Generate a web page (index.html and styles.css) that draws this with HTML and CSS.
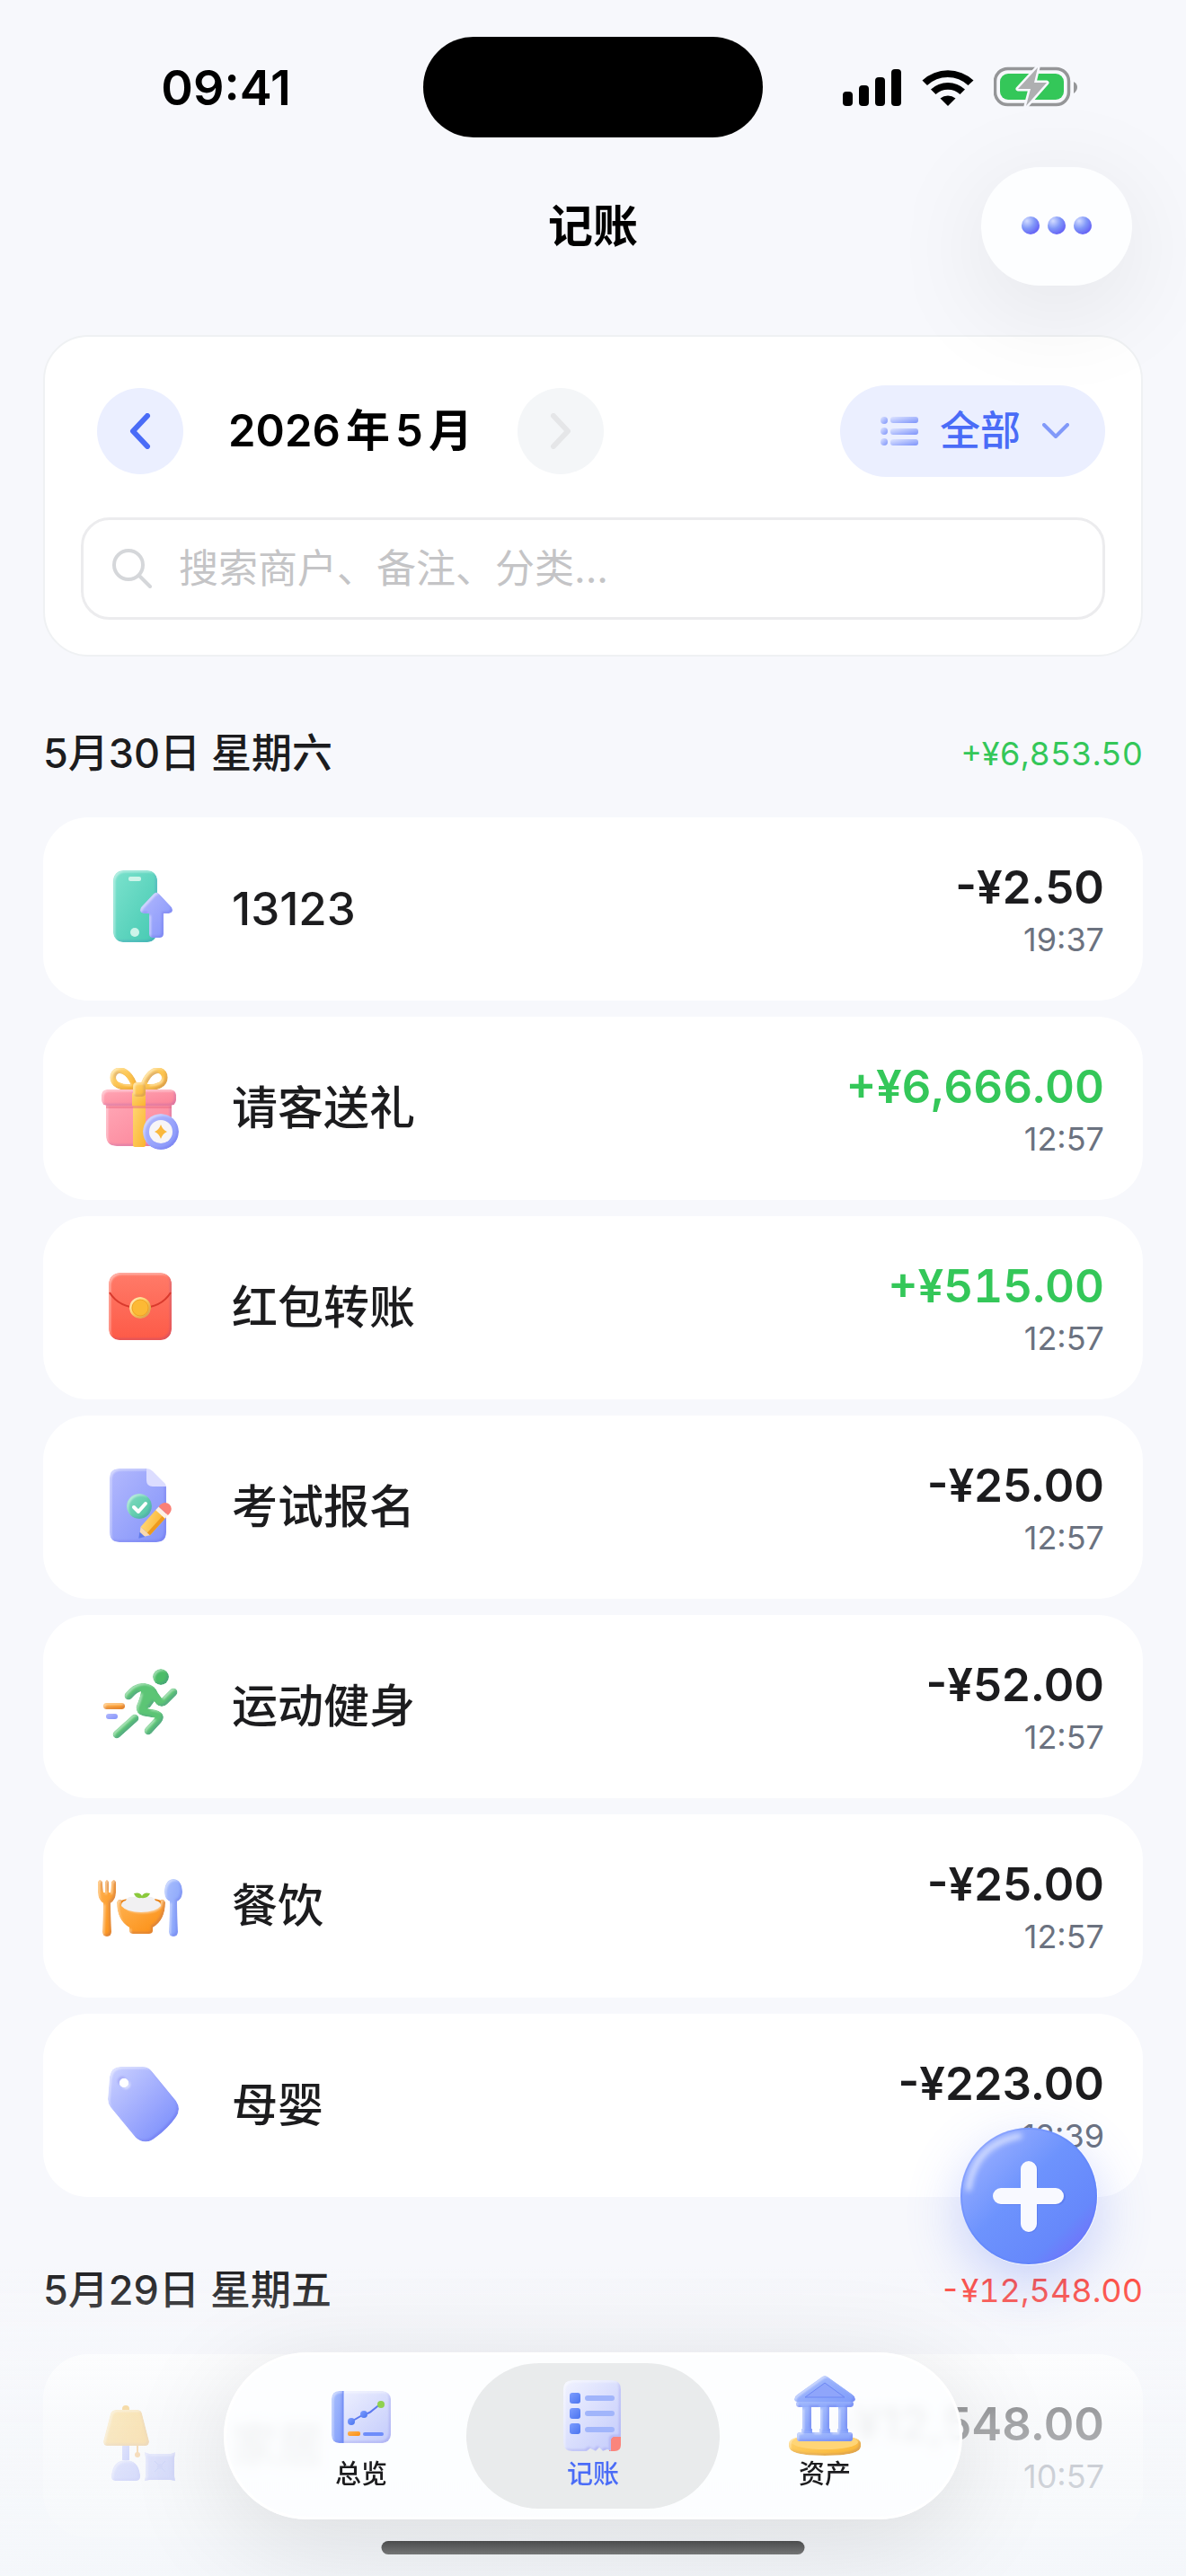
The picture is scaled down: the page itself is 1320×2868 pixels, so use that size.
FILE: index.html
```html
<!DOCTYPE html>
<html lang="zh-CN">

<head>
  <meta charset="utf-8">
  <meta name="viewport" content="width=device-width">
  <title>记账</title>
  <link rel="stylesheet" href="styles.css">
</head>

<body>
  <!-- shared gradients and the soft bevel used by the 3D icons -->
  <svg class="defs" width="0" height="0" aria-hidden="true">
    <defs>
      <linearGradient id="teal" x1="0" y1="0" x2="1" y2="1"><stop offset="0" stop-color="#7ce2cd"/><stop offset="1" stop-color="#45c9b2"/></linearGradient>
      <linearGradient id="violet" x1="0" y1="0" x2="1" y2="1"><stop offset="0" stop-color="#b3b9fd"/><stop offset="1" stop-color="#8393fa"/></linearGradient>
      <linearGradient id="pink" x1="0" y1="0" x2="1" y2="1"><stop offset="0" stop-color="#ffa6b5"/><stop offset="1" stop-color="#fb8297"/></linearGradient>
      <linearGradient id="gold" x1="0" y1="0" x2="1" y2="1"><stop offset="0" stop-color="#ffd674"/><stop offset="1" stop-color="#fab42f"/></linearGradient>
      <linearGradient id="red" x1="0" y1="0" x2="0" y2="1"><stop offset="0" stop-color="#ff7b69"/><stop offset="1" stop-color="#fd5a47"/></linearGradient>
      <linearGradient id="mint" x1="0" y1="0" x2="1" y2="1"><stop offset="0" stop-color="#83dcc2"/><stop offset="1" stop-color="#4cc39f"/></linearGradient>
      <linearGradient id="orange" x1="0" y1="0" x2="1" y2="1"><stop offset="0" stop-color="#ffb454"/><stop offset="1" stop-color="#fb8c0f"/></linearGradient>
      <linearGradient id="sky" x1="0" y1="0" x2="1" y2="1"><stop offset="0" stop-color="#a9bffd"/><stop offset="1" stop-color="#7f9cfa"/></linearGradient>
      <linearGradient id="tag" x1="0" y1="0" x2="1" y2="1"><stop offset="0" stop-color="#ccd2ff"/><stop offset=".6" stop-color="#98a5fd"/><stop offset="1" stop-color="#7389fb"/></linearGradient>
      <linearGradient id="paper" x1="0" y1="0" x2="1" y2="1"><stop offset="0" stop-color="#f1f3ff"/><stop offset="1" stop-color="#c2cafb"/></linearGradient>
      <linearGradient id="blue" x1="0" y1="0" x2="1" y2="1"><stop offset="0" stop-color="#7d9dff"/><stop offset="1" stop-color="#4a74ef"/></linearGradient>
      <linearGradient id="fab" x1="0" y1="0" x2="1" y2="1"><stop offset=".1" stop-color="#9bb0ff"/><stop offset=".45" stop-color="#6d93fd"/><stop offset=".75" stop-color="#6688fb"/><stop offset=".9" stop-color="#7270fa"/></linearGradient>
      <linearGradient id="dash" x1="0" y1="0" x2="1" y2="1"><stop offset="0" stop-color="#dfe5ff"/><stop offset="1" stop-color="#7c93fb"/></linearGradient>
      <radialGradient id="dot" cx=".3" cy=".25" r=".85"><stop offset="0" stop-color="#d3dcff"/><stop offset=".5" stop-color="#8097f8"/><stop offset="1" stop-color="#6058f5"/></radialGradient>
      <filter id="bevel" x="-10%" y="-10%" width="120%" height="120%" color-interpolation-filters="sRGB">
        <feOffset in="SourceAlpha" dx="2" dy="2" result="o1"/>
        <feComposite in="SourceAlpha" in2="o1" operator="out" result="edge1"/>
        <feGaussianBlur in="edge1" stdDeviation="1" result="b1"/>
        <feFlood flood-color="#fff" flood-opacity=".55"/>
        <feComposite in2="b1" operator="in" result="light"/>
        <feOffset in="SourceAlpha" dx="-2" dy="-2" result="o2"/>
        <feComposite in="SourceAlpha" in2="o2" operator="out" result="edge2"/>
        <feGaussianBlur in="edge2" stdDeviation="1" result="b2"/>
        <feFlood flood-color="#3b2fd0" flood-opacity=".18"/>
        <feComposite in2="b2" operator="in" result="dark"/>
        <feMerge result="all"><feMergeNode in="SourceGraphic"/><feMergeNode in="light"/><feMergeNode in="dark"/></feMerge>
        <feComposite in="all" in2="SourceAlpha" operator="in"/>
      </filter>
    </defs>
  </svg>

  <div class="status">
    <time class="clock">09:41</time>
    <div class="island"></div>
    <div class="indicators">
      <svg width="66" height="42" viewBox="0 0 66 42">
        <rect x="0" y="26" width="11" height="16" rx="4"/>
        <rect x="18" y="19" width="11" height="23" rx="4"/>
        <rect x="36" y="10" width="11" height="32" rx="4"/>
        <rect x="54" y="1" width="11" height="41" rx="4"/>
      </svg>
      <svg width="58" height="42" viewBox="0 0 58 42">
        <path d="M29 42 20.500 33.500A13.500 13.500 0 0 1 37.500 33.500Z"/>
        <path d="M10 23.500A28 28 0 0 1 48 23.500L42.500 29A20 20 0 0 0 15.500 29Z"/>
        <path d="M0.500 13.500A42 42 0 0 1 57.500 13.500L51.500 19A33 33 0 0 0 6 19Z"/>
      </svg>
      <svg width="94" height="46" viewBox="0 0 94 46">
        <rect x="1.500" y="2.500" width="82" height="40" rx="14" fill="none" stroke="#959698" stroke-width="3.500"/>
        <rect x="7" y="8" width="71" height="29" rx="9" fill="#34c759"/>
        <path d="M89 17q4 2 4 6t-4 7z" fill="#959698"/>
        <path d="M49 1 27 25h14l-5 19 23-26H45z" fill="#aeafb1" stroke="#f7f8fd" stroke-width="5" stroke-linejoin="round" paint-order="stroke"/>
      </svg>
    </div>
  </div>

  <header class="nav">
    <h1>记账</h1>
    <button class="more" aria-label="更多">
      <svg width="78" height="20" viewBox="0 0 78 20" fill="url(#dot)">
        <circle cx="10" cy="10" r="10"/><circle cx="39" cy="10" r="10"/><circle cx="68" cy="10" r="10"/>
      </svg>
    </button>
  </header>

  <main>
    <section class="filters">
      <div class="filter-row">
        <button class="round" aria-label="上个月">
          <svg width="24" height="40" viewBox="0 0 24 40"><path d="M20 3 4 20l16 17"/></svg>
        </button>
        <h2>2026年5月</h2>
        <button class="round" aria-label="下个月" disabled>
          <svg width="24" height="40" viewBox="0 0 24 40"><path d="m4 3 16 17L4 37"/></svg>
        </button>
        <button class="category">
          <svg width="42" height="34" viewBox="0 0 42 34" fill="url(#dash)">
            <circle cx="4" cy="5" r="4"/><rect x="11" y="1" width="31" height="7" rx="3"/>
            <circle cx="4" cy="17" r="4"/><rect x="11" y="14" width="31" height="7" rx="3"/>
            <circle cx="4" cy="29" r="4"/><rect x="11" y="26" width="31" height="7" rx="3"/>
          </svg>
          全部
          <svg class="caret" width="30" height="18" viewBox="0 0 30 18"><path d="m2 2 13 13L28 2"/></svg>
        </button>
      </div>
      <label class="search">
        <svg width="44" height="44" viewBox="0 0 44 44"><circle cx="18" cy="18" r="16"/><path d="m30 30 12 12"/></svg>
        <input type="text" placeholder="搜索商户、备注、分类..." aria-label="搜索">
      </label>
    </section>

    <section class="day">
      <header>
        <h3>5月30日 星期六</h3>
        <span class="total income">+¥6,853.50</span>
      </header>
      <ul>
        <li>
          <svg class="icon" viewBox="0 0 108 108">
            <rect x="24" y="11" width="49" height="80" rx="11" fill="url(#teal)" filter="url(#bevel)"/>
            <rect x="41" y="18" width="14" height="5" rx="2" fill="#cdf4e9"/>
            <circle cx="48" cy="80" r="5" fill="#cdf4e9"/>
            <path d="M69 37q3-3 6 0l14 15q3 6-3 7h-6v23q0 4-4 4h-8q-4 0-4-4V59h-6q-6-1-3-7z" fill="url(#violet)" filter="url(#bevel)"/>
          </svg>
          <span class="name">13123</span>
          <div class="sum"><b>-¥2.50</b><time>19:37</time></div>
        </li>
        <li>
          <svg class="icon" viewBox="0 0 108 108">
            <g fill="none" stroke="url(#gold)" stroke-width="7" filter="url(#bevel)">
              <path d="M48 30C44 17 36 10 29 12c-7 3-7 12 0 16 6 3 13 3 19 2z"/>
              <path d="M57 30C61 17 69 10 76 12c7 3 7 12 0 16-6 3-13 3-19 2z"/>
            </g>
            <path d="M16 49h73v35q0 12-12 12H28q-12 0-12-12z" fill="url(#pink)" filter="url(#bevel)"/>
            <rect x="46" y="49" width="14" height="48" rx="2" fill="url(#gold)"/>
            <path d="M16 51h73v3H16z" fill="#e8607b" opacity=".45"/>
            <rect x="11" y="33" width="83" height="18" rx="6" fill="url(#pink)" filter="url(#bevel)"/>
            <rect x="45" y="37" width="15" height="14" fill="url(#gold)"/>
            <rect x="46" y="25" width="14" height="16" rx="4" fill="url(#gold)" filter="url(#bevel)"/>
            <circle cx="77" cy="80" r="20" fill="url(#violet)" filter="url(#bevel)"/>
            <circle cx="77" cy="80" r="13" fill="#f7f5f7"/>
            <path d="M77 72q2 6 7 8-5 2-7 8-2-6-7-8 5-2 7-8z" fill="#fab83c"/>
          </svg>
          <span class="name">请客送礼</span>
          <div class="sum"><b class="income">+¥6,666.00</b><time>12:57</time></div>
        </li>
        <li>
          <svg class="icon" viewBox="0 0 108 108">
            <rect x="19" y="15" width="70" height="75" rx="12" fill="url(#red)" filter="url(#bevel)"/>
            <path d="M20 37c8 13 22 17 34 17s26-4 34-17" fill="none" stroke="#d93a2d" stroke-width="2"/>
            <circle cx="54" cy="54" r="12" fill="url(#gold)" filter="url(#bevel)"/>
            <circle cx="54" cy="54" r="9" fill="#fcb935" stroke="#f0a424"/>
          </svg>
          <span class="name">红包转账</span>
          <div class="sum"><b class="income">+¥515.00</b><time>12:57</time></div>
        </li>
        <li>
          <svg class="icon" viewBox="0 0 108 108">
            <path d="M31 11h30l22 20v51q0 11-11 11H31q-11 0-11-11V22q0-11 11-11z" fill="url(#violet)" filter="url(#bevel)"/>
            <path d="M61 11q4 0 7 3l12 12q3 2 3 5H68q-7 0-7-7z" fill="#dcddff"/>
            <circle cx="53" cy="53" r="14" fill="url(#mint)" filter="url(#bevel)"/>
            <path d="m47 54 5 5 8-9" fill="none" stroke="#fff" stroke-width="4" stroke-linecap="round" stroke-linejoin="round"/>
            <g transform="translate(53 88) rotate(-48)">
              <path d="M0 0 10-7V7z" fill="#f9d9b0"/>
              <path d="M-1 0 5-4V4z" fill="#5f7bea"/>
              <rect x="10" y="-7" width="26" height="14" fill="url(#gold)"/>
              <rect x="10" y="3" width="26" height="4" fill="#ee9a1d"/>
              <rect x="35" y="-7" width="5" height="14" fill="#fdf1e4"/>
              <path d="M40-7h3a7 7 0 0 1 0 14h-3z" fill="#fa8076"/>
            </g>
          </svg>
          <span class="name">考试报名</span>
          <div class="sum"><b>-¥25.00</b><time>12:57</time></div>
        </li>
        <li>
          <svg class="icon" viewBox="0 0 108 108">
            <g filter="url(#bevel)">
              <circle cx="77" cy="21" r="9" fill="#4bbd68"/>
              <g fill="none" stroke="#5cc575" stroke-width="9" stroke-linecap="round" stroke-linejoin="round">
                <path d="M41 42q10-12 20-9 6 1 9 8l5 7q3 3 6 0l10-10"/>
                <path d="M61 37 54 55q0 4 4 5l12 2q8 2 4 7L63 81"/>
                <path d="M48 67 28 85"/>
              </g>
              <path d="M56 32h10l7 12-8 11-10 4-4-4z" fill="#5cc575"/>
            </g>
            <rect x="13" y="50" width="24" height="7" rx="3" fill="url(#orange)" filter="url(#bevel)"/>
            <rect x="16" y="62" width="13" height="6" rx="3" fill="url(#violet)"/>
          </svg>
          <span class="name">运动健身</span>
          <div class="sum"><b>-¥52.00</b><time>12:57</time></div>
        </li>
        <li>
          <svg class="icon" viewBox="0 0 108 108">
            <path d="M7 27q2-4 5 0l1 12h2V27q2-4 4 0v12h2l1-12q3-4 5 0v12q0 8-6 12l1 32q0 5-5 5t-5-5l1-32q-6-4-6-12z" fill="url(#orange)" filter="url(#bevel)"/>
            <ellipse cx="55" cy="51" rx="26" ry="6" fill="#e98114"/>
            <path d="M28 50q1-4 5-3 0 8 8 11 14 4 28 0 8-3 8-11 4-1 5 3 0 20-14 28v4q0 3-4 3H46q-4 0-4-3v-4Q28 70 28 50z" fill="url(#orange)" filter="url(#bevel)"/>
            <path d="M33 54q0-5 5-6 2-5 9-4 8-4 15 0 7-1 9 4 6 1 6 6-6 7-22 7t-22-7z" fill="#f1f0f2"/>
            <path d="M55 45q-6 1-8-5 7-2 9 3 2-5 9-3-2 6-10 5z" fill="#8bc93d"/>
            <path d="M91 24c7 0 10 7 10 14 0 6-2 9-6 11l1 34q0 5-5 5t-5-5l1-34c-4-2-6-5-6-11 0-7 3-14 10-14z" fill="url(#sky)" filter="url(#bevel)"/>
          </svg>
          <span class="name">餐饮</span>
          <div class="sum"><b>-¥25.00</b><time>12:57</time></div>
        </li>
        <li>
          <svg class="icon" viewBox="0 0 108 108">
            <path fill-rule="evenodd" d="M32 11h25q6 0 10 5l27 33q6 9 0 18-9 13-23 23-11 9-22 0L21 56q-3-4-3-9l2-25q2-11 12-11zM36 24a5 5 0 1 0 0 10 5 5 0 0 0 0-10z" fill="url(#tag)" filter="url(#bevel)"/>
          </svg>
          <span class="name">母婴</span>
          <div class="sum"><b>-¥223.00</b><time>12:39</time></div>
        </li>
      </ul>
    </section>

    <section class="day">
      <header>
        <h3>5月29日 星期五</h3>
        <span class="total expense">-¥12,548.00</span>
      </header>
      <ul>
        <li>
          <svg class="icon" viewBox="0 0 108 108">
            <circle cx="38" cy="13" r="4" fill="#f5b63c"/>
            <path d="M27 14h24q4 0 5 4l8 31q0 5-4 5H17q-4 0-4-5l8-31q2-4 6-4z" fill="url(#gold)" filter="url(#bevel)"/>
            <path d="M34 54h8v16h-8z" fill="url(#violet)"/>
            <path d="M22 86q2-16 16-16t16 16q1 7-4 7H26q-5 0-4-7z" fill="url(#violet)" filter="url(#bevel)"/>
            <path d="M51 54v8" stroke="#f5a63c" stroke-width="2"/><circle cx="51" cy="64" r="3" fill="#f5a63c"/>
            <path d="M59 61q3 1 6 2h22q3-1 6-2 0 4-1 7v19q1 3 1 6-3 0-6-1H65q-3 1-6 1 0-3 1-6V68q-1-3-1-7z" fill="url(#violet)" filter="url(#bevel)"/>
            <path d="m70 71 12 12m0-12L70 83" stroke="#7b8cf2" stroke-width="1"/><circle cx="76" cy="77" r="3" fill="#8c9af8"/>
          </svg>
          <span class="name">家居</span>
          <div class="sum"><b>-¥12,548.00</b><time>10:57</time></div>
        </li>
      </ul>
    </section>
  </main>

  <div class="fade"></div>

  <button class="add" aria-label="记一笔">
    <svg viewBox="0 0 153 153">
      <circle cx="76" cy="76" r="76" fill="url(#fab)"/>
      <circle cx="76" cy="76" r="75" fill="none" stroke="#5a7dfb" stroke-width="2" opacity=".3"/>
      <path class="shine" d="M9 68Q16 18 66 9"/>
      <path d="M77 46v62M46 77h62" stroke="#4a66df" stroke-width="18" stroke-linecap="round" opacity=".35"/>
      <path d="M76 46v61M45 76h61" stroke="#f8f9ff" stroke-width="18" stroke-linecap="round"/>
    </svg>
  </button>

  <nav class="tabs">
    <a href="#overview">
      <svg viewBox="0 0 96 96">
        <rect x="15" y="20" width="66" height="58" rx="9" fill="url(#paper)" filter="url(#bevel)"/>
        <path d="M24 20h4v58h-4q-9 0-9-9V29q0-9 9-9z" fill="url(#sky)" filter="url(#bevel)"/>
        <path d="M28 20v58" stroke="#6584f5" stroke-width="1"/>
        <path d="m37 54 14-8q6-1 9-4l10-8" fill="none" stroke="#5c78f0" stroke-width="2"/>
        <circle cx="37" cy="54" r="4" fill="url(#blue)"/><circle cx="51" cy="46" r="4" fill="url(#blue)"/><circle cx="70" cy="35" r="4" fill="#8fd14f"/>
        <rect x="33" y="65" width="14" height="5" rx="2" fill="url(#orange)"/>
        <rect x="50" y="66" width="23" height="4" rx="2" fill="#6e8dfa"/>
      </svg>
      总览
    </a>
    <a href="#ledger" class="active">
      <svg viewBox="0 0 96 96">
        <path d="M66 87V74q0-3 4-3h9v9q0 7-7 7z" fill="#fa857c"/>
        <path d="M25 8h44q10 0 10 10v53h-6q-5 0-5 5v11l-4-2-5 2-4-4-4 4-6-3-4 3H25q-10 0-10-10V18Q15 8 25 8z" fill="url(#paper)" filter="url(#bevel)"/>
        <g fill="url(#blue)">
          <rect x="22" y="22" width="12" height="12" rx="3"/><rect x="22" y="39" width="12" height="12" rx="3"/><rect x="22" y="56" width="12" height="12" rx="3"/>
        </g>
        <g fill="#a1b5fb">
          <rect x="39" y="25" width="33" height="6" rx="3"/><rect x="39" y="42" width="33" height="6" rx="3"/><rect x="39" y="60" width="33" height="6" rx="3"/>
        </g>
      </svg>
      记账
    </a>
    <a href="#assets">
      <svg viewBox="0 0 96 96">
        <path d="M8 78q0-9 40-9t40 9v4q0 10-40 10T8 82z" fill="url(#gold)" filter="url(#bevel)"/>
        <ellipse cx="48" cy="77" rx="37" ry="8" fill="#ffd576"/>
        <g fill="url(#sky)" filter="url(#bevel)">
          <rect x="17" y="66" width="62" height="10" rx="2"/>
          <rect x="22" y="62" width="12" height="5"/><rect x="42" y="62" width="12" height="5"/><rect x="62" y="62" width="12" height="5"/>
          <rect x="23" y="38" width="10" height="27"/><rect x="43" y="38" width="10" height="27"/><rect x="63" y="38" width="10" height="27"/>
          <rect x="16" y="31" width="64" height="7" rx="3"/>
          <path d="M45 4q3-2 6 0l28 20q3 2 3 5t-3 3H17q-3 0-3-3t3-5z"/>
        </g>
        <path d="m48 11 22 16H26z" fill="#8fa5fa" stroke="#6c87f4" stroke-width="1"/>
      </svg>
      资产
    </a>
  </nav>
  <div class="home-bar"></div>
</body>

</html>
```

FILE: styles.css
```css
* {
  box-sizing: border-box;
}

body {
  margin: 0;
  min-height: 100vh;
  background: #f7f8fc;
  color: #1c1c1e;
  font-family: Inter, "Noto Sans CJK SC", sans-serif;
}

h1,
h2,
h3,
ul {
  margin: 0;
  padding: 0;
}

h1,
h2,
h3,
.name {
  line-height: 60px;
}

button {
  border: none;
  padding: 0;
  font-family: inherit;
}

.defs {
  position: absolute;
}

/* status bar */
.status {
  display: grid;
  grid-template-columns: 1fr 378px 1fr;
  align-items: center;
  justify-items: center;
  padding: 41px 32px 0;
}

.clock {
  color: #000;
  font-size: 54px;
  font-weight: 600;
}

.island {
  width: 100%;
  height: 112px;
  border-radius: 56px;
  background: #000;
}

.indicators {
  display: flex;
  align-items: center;
  gap: 22px;
}

/* title bar */
.nav {
  display: grid;
  grid-template-columns: 1fr auto 1fr;
  align-items: center;
  margin-top: 33px;
  padding: 0 60px;
}

.nav h1 {
  grid-column: 2;
  color: #000;
  font-size: 50px;
  font-weight: 600;
}

.more {
  justify-self: end;
  width: 168px;
  height: 132px;
  border-radius: 66px;
  background: #fdfeff;
  box-shadow: 0 24px 120px rgba(0, 0, 0, .09);
}

main {
  padding: 55px 48px 0;
}

/* month + search */
.filters {
  padding: 54px 40px 39px;
  border: 2px solid #eff1f3;
  border-radius: 50px;
  background: #fff;
  margin-bottom: 4px;
}

.filter-row {
  display: flex;
  align-items: center;
  gap: 48px;
  margin-bottom: 45px;
  padding-left: 18px;
}

.filter-row h2 {
  min-width: 276px;
  color: #000;
  font-size: 49px;
  font-weight: 600;
  text-align: center;
  text-autospace: normal;
}

.round {
  display: grid;
  place-items: center;
  width: 96px;
  height: 96px;
  border-radius: 50%;
  background: #ebefff;
}

.round:disabled {
  background: #f4f6f8;
}

.round path,
.caret path,
.search svg {
  fill: none;
  stroke: #4a6cf7;
  stroke-width: 6px;
  stroke-linecap: round;
  stroke-linejoin: round;
}

.round:disabled path {
  stroke: #e5e6e8;
}

.category {
  display: flex;
  align-items: center;
  gap: 24px;
  height: 102px;
  margin-left: auto;
  padding: 0 40px 0 45px;
  border-radius: 51px;
  background: #ebefff;
  color: #4a6cf7;
  font-size: 45px;
  font-weight: 500;
  line-height: 60px;
}

.caret path {
  stroke: #8199f9;
  stroke-width: 4px;
}

.search {
  display: flex;
  align-items: center;
  gap: 28px;
  height: 114px;
  padding: 0 32px;
  border: 3px solid #ececee;
  border-radius: 32px;
}

.search svg {
  stroke: #d5d7da;
  stroke-width: 4px;
}

.search input {
  flex: 1;
  border: none;
  outline: none;
  background: none;
  font: inherit;
  font-size: 44px;
}

.search input::placeholder {
  color: #c4c4c6;
}

/* day groups */
.day header {
  display: flex;
  align-items: center;
  justify-content: space-between;
  height: 175px;
  padding-top: 33px;
}

.day h3 {
  font-size: 45px;
  font-weight: 500;
}

.total {
  font-size: 36px;
  font-feature-settings: "tnum";
}

.income {
  color: #34c759;
}

.expense {
  color: #ff453a;
}

.day ul {
  display: grid;
  gap: 18px;
  list-style: none;
}

.day li {
  display: flex;
  align-items: center;
  gap: 48px;
  height: 204px;
  padding: 0 43px 0 54px;
  border-radius: 50px;
  background: #fff;
}

.icon {
  width: 108px;
  height: 108px;
}

.name {
  flex: 1;
  font-size: 51px;
  font-weight: 500;
}

.sum {
  display: grid;
  gap: 4px;
  padding-top: 4px;
  text-align: right;
}

.sum b {
  font-size: 51px;
  font-weight: 600;
  line-height: 60px;
}

.sum .income {
  font-feature-settings: "tnum";
}

.sum time {
  color: #6b7280;
  font-size: 36px;
  line-height: 48px;
}

/* floating layer */
.fade {
  position: fixed;
  inset: auto 0 0;
  height: 348px;
  background: linear-gradient(rgba(246, 248, 251, 0), rgba(246, 248, 251, .62) 50%, rgba(244, 247, 250, .88));
  pointer-events: none;
}

.add {
  position: fixed;
  right: 98px;
  bottom: 346px;
  width: 153px;
  height: 153px;
  border-radius: 50%;
  background: none;
  box-shadow: 0 20px 60px rgba(90, 120, 250, .3);
}

.add svg {
  display: block;
}

.shine {
  fill: none;
  stroke: #fff;
  stroke-width: 5px;
  stroke-linecap: round;
  opacity: .75;
  filter: blur(3px);
}

.tabs {
  position: fixed;
  left: 50%;
  bottom: 63px;
  display: flex;
  justify-content: center;
  width: 822px;
  height: 186px;
  padding: 12px;
  transform: translateX(-50%);
  border: 3px solid #fff;
  border-radius: 93px;
  background: rgba(253, 254, 255, .86);
  backdrop-filter: blur(6px);
  box-shadow: 0 24px 120px rgba(0, 0, 0, .12);
}

.tabs a {
  display: flex;
  flex-direction: column;
  align-items: center;
  width: 282px;
  margin: -3px -12px;
  padding-top: 11px;
  height: 162px;
  border-radius: 81px;
  color: #1c1c1e;
  font-size: 29px;
  font-weight: 500;
  line-height: 34px;
  text-decoration: none;
}

.tabs .active {
  background: #e9ebec;
  color: #4a6cf7;
}

.tabs svg {
  width: 96px;
  height: 96px;
}

.home-bar {
  position: fixed;
  left: 50%;
  bottom: 24px;
  width: 471px;
  height: 15px;
  transform: translateX(-50%);
  border-radius: 8px;
  background: linear-gradient(#4b4c4d, #747576);
}
```
